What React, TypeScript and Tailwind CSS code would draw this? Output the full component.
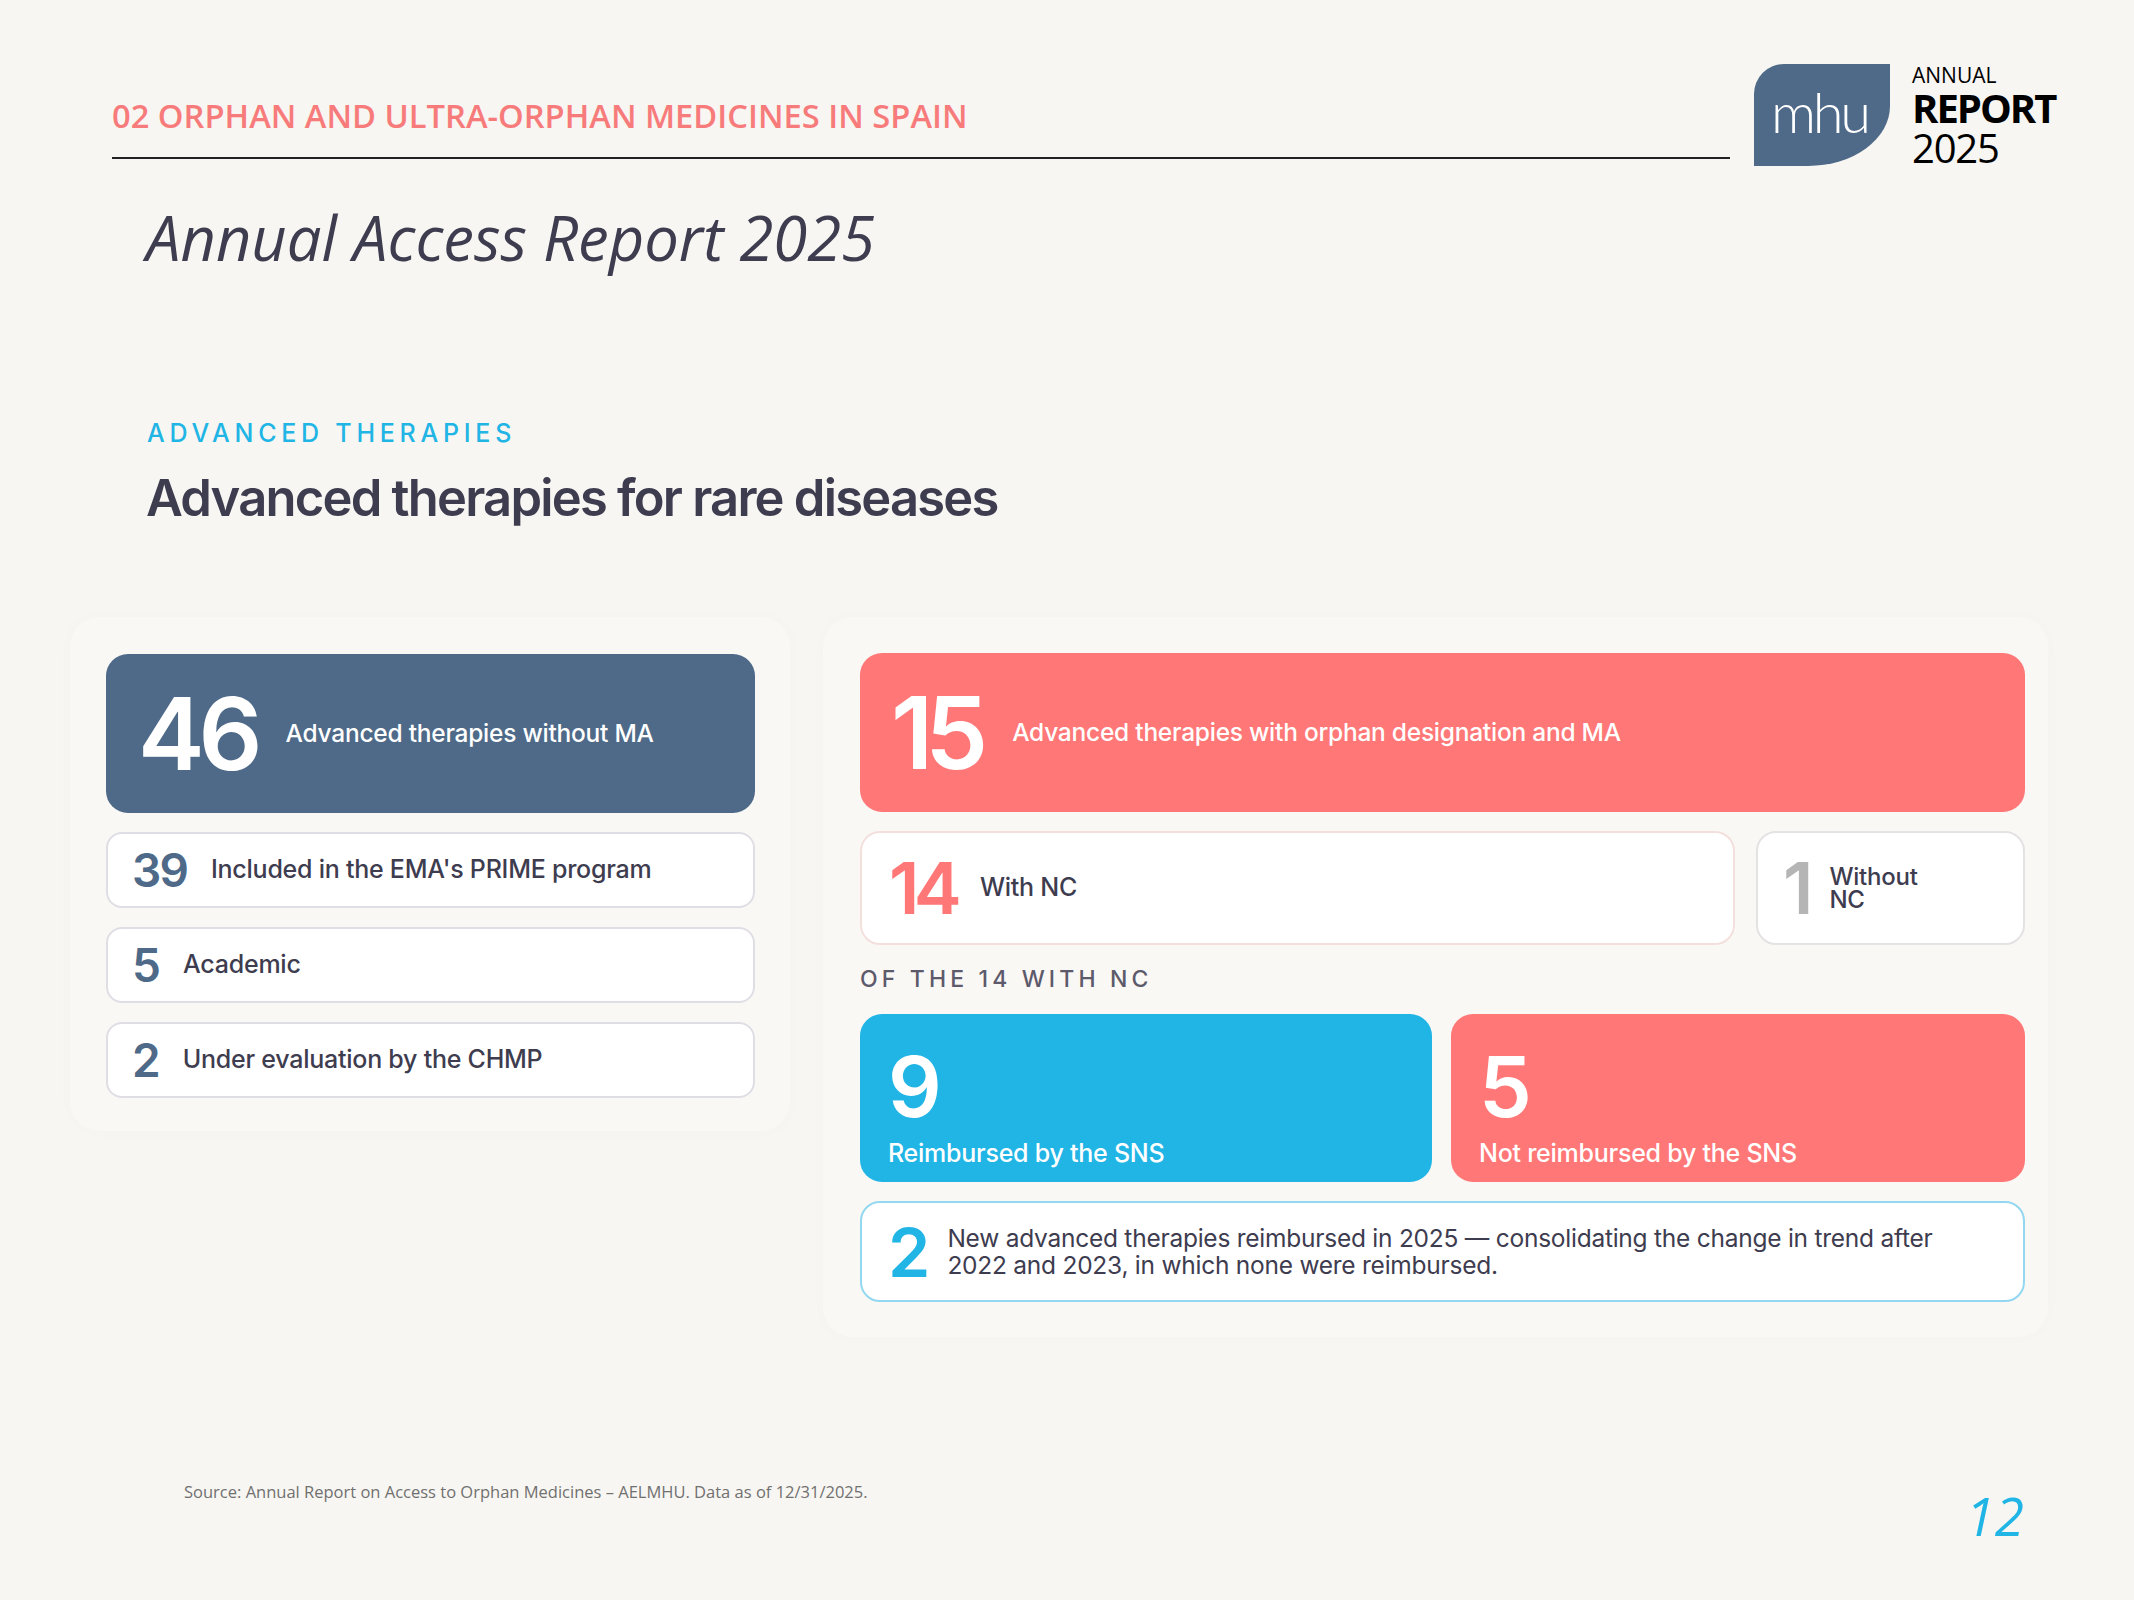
import React from "react";

const sans = "font-['Inter','Noto_Sans',sans-serif]";
const open = "font-['Open_Sans','Noto_Sans',sans-serif]";

type Row = { value: string; label: string };

const leftRows: Row[] = [
  { value: "39", label: "Included in the EMA's PRIME program" },
  { value: "5", label: "Academic" },
  { value: "2", label: "Under evaluation by the CHMP" },
];

function Logo() {
  return (
    <div className="flex items-start">
      <div className="mt-[3px] h-[102px] w-[136px] rounded-tl-[30px] rounded-br-[82px_60px] bg-[#4e6a88] pl-[17px] pt-[20px]">
        <span className="block font-['Lato',sans-serif] text-[56px] font-light leading-none tracking-[-0.06em] text-white">
          mhu
        </span>
      </div>
      <p className={`${open} ml-[22px] mt-[3px] text-[21px] leading-[22px] text-black`}>
        ANNUAL
        <br />
        <span className="inline-block pt-[2px] text-[40px] font-bold leading-[40px] tracking-[-0.05em]">REPORT</span>
        <br />
        <span className="inline-block text-[40px] leading-[40px] tracking-[-0.03em]">2025</span>
      </p>
    </div>
  );
}

export default function App() {
  return (
    <div className="flex h-[1600px] w-[2134px] flex-col overflow-hidden bg-[#f8f6f2]">
      <header className="flex h-[171px] shrink-0 pl-[112px] pt-[61px]">
        <div className="w-[1618px] pt-[39px]">
          <p className={`${open} text-[32.7px] font-semibold leading-none text-[#f77b7b]`}>
            02 ORPHAN AND ULTRA-ORPHAN MEDICINES IN SPAIN
          </p>
          <div className="mt-[24px] h-[2px] bg-[#222]" />
        </div>
        <div className="ml-[24px]">
          <Logo />
        </div>
      </header>

      <h1 className={`${open} ml-[146px] mt-[36px] text-[61.5px] italic leading-none text-[#3e3c4f]`}>
        Annual Access Report 2025
      </h1>

      <p className={`${sans} ml-[147px] mt-[152px] text-[25px] font-medium leading-none tracking-[0.19em] text-[#21b5e6]`}>
        ADVANCED THERAPIES
      </p>
      <h2 className={`${sans} ml-[146px] mt-[27px] text-[50.7px] font-semibold leading-none tracking-[-0.035em] text-[#3e3c4f]`}>
        Advanced therapies for rare diseases
      </h2>

      <div className={`${sans} mt-[94px] flex items-start gap-[33px] pl-[70px]`}>
        {/* left panel */}
        <section className="flex w-[720px] flex-col gap-[19px] rounded-[30px] bg-[#faf8f5] pb-[33px] pl-[36px] pt-[37px] shadow-[0_0_20px_rgba(0,0,0,0.015)]">
          <div className="flex h-[159px] w-[649px] items-center rounded-[22px] bg-[#4e6a88] pl-[32px] text-white">
            <span className="text-[100px] font-semibold leading-none tracking-[-0.06em]">46</span>
            <span className="ml-[29px] text-[24.5px] font-medium tracking-[-0.01em]">Advanced therapies without MA</span>
          </div>
          {leftRows.map((row) => (
            <div
              key={row.label}
              className="flex h-[76px] w-[649px] items-center rounded-[16px] border-2 border-[#e0dee5] bg-white pl-[24px]"
            >
              <span className="text-[46px] font-semibold leading-none tracking-[-0.04em] text-[#4e6a88]">{row.value}</span>
              <span className="ml-[24px] text-[25px] font-medium tracking-[-0.01em] text-[#3e3c4f]">{row.label}</span>
            </div>
          ))}
        </section>

        {/* right panel */}
        <section className="flex w-[1225px] flex-col rounded-[30px] bg-[#faf8f5] pb-[35px] pl-[37px] pr-[23px] pt-[36px] shadow-[0_0_20px_rgba(0,0,0,0.015)]">
          <div className="flex h-[159px] items-center rounded-[22px] bg-[#ff7777] pl-[31px] text-white">
            <span className="text-[100px] font-semibold leading-none tracking-[-0.08em]">15</span>
            <span className="ml-[32px] text-[24.5px] font-medium tracking-[-0.01em]">
              Advanced therapies with orphan designation and MA
            </span>
          </div>

          <div className="mt-[19px] flex gap-[21px]">
            <div className="flex h-[114px] w-[875px] items-center rounded-[20px] border-2 border-[#f3e0dd] bg-white pl-[27px]">
              <span className="text-[72px] font-semibold leading-none tracking-[-0.08em] text-[#ff7777]">14</span>
              <span className="ml-[24px] text-[25px] font-medium tracking-[-0.01em] text-[#3e3c4f]">With NC</span>
            </div>
            <div className="flex h-[114px] flex-1 items-center rounded-[20px] border-2 border-[#e4e2e2] bg-white pl-[25px]">
              <span className="text-[72px] font-semibold leading-none text-[#b5b5b5]">1</span>
              <span className="ml-[16px] w-min text-[24px] font-medium leading-[23px] tracking-[-0.01em] text-[#3e3c4f]">
                Without NC
              </span>
            </div>
          </div>

          <p className="mt-[23px] text-[23px] font-medium leading-none tracking-[0.18em] text-[#5d5a6b]">OF THE 14 WITH NC</p>

          <div className="mt-[23px] flex gap-[19px]">
            <div className="flex h-[168px] w-[572px] flex-col rounded-[22px] bg-[#21b5e6] pl-[28px] pt-[31px] text-white">
              <span className="text-[84px] font-semibold leading-none">9</span>
              <span className="mt-[12px] text-[25px] font-medium leading-none tracking-[-0.01em]">Reimbursed by the SNS</span>
            </div>
            <div className="flex h-[168px] flex-1 flex-col rounded-[22px] bg-[#ff7777] pl-[28px] pt-[31px] text-white">
              <span className="text-[84px] font-semibold leading-none">5</span>
              <span className="mt-[12px] text-[25px] font-medium leading-none tracking-[-0.01em]">Not reimbursed by the SNS</span>
            </div>
          </div>

          <div className="mt-[19px] flex h-[101px] items-center rounded-[20px] border-2 border-[#93d8f0] bg-white pl-[26px]">
            <span className="text-[68px] font-semibold leading-none text-[#21b5e6]">2</span>
            <p className="ml-[17px] max-w-[1030px] text-[24.5px] leading-[27px] tracking-[-0.01em] text-[#3e3c4f]">
              New advanced therapies reimbursed in 2025 — consolidating the change in trend after 2022 and 2023, in which
              none were reimbursed.
            </p>
          </div>
        </section>
      </div>

      <footer className={`${open} mt-auto flex items-start justify-between pb-[58px] pl-[184px] pr-[110px]`}>
        <p className="text-[16.5px] leading-none text-[#707070]">
          Source: Annual Report on Access to Orphan Medicines – AELMHU. Data as of 12/31/2025.
        </p>
        <p className="mt-[5px] text-[53px] italic leading-none text-[#21b5e6]">12</p>
      </footer>
    </div>
  );
}
